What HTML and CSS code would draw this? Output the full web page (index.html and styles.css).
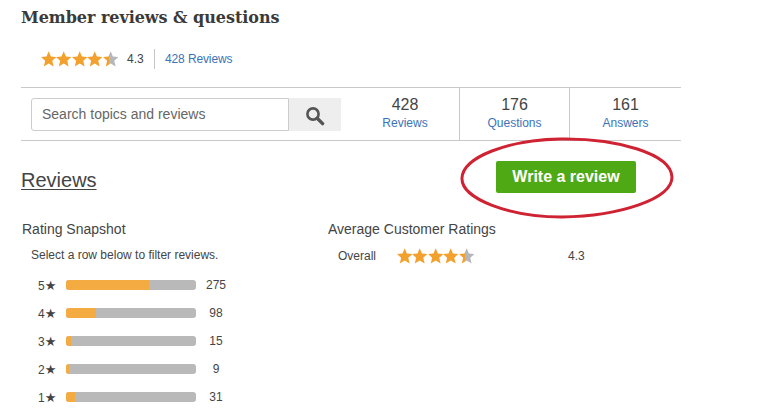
FILE: index.html
```html
<!DOCTYPE html>
<html lang="en">
<head>
<meta charset="utf-8">
<title>Member reviews &amp; questions</title>
<link rel="stylesheet" href="styles.css">
</head>
<body>
<svg class="defs" width="0" height="0" aria-hidden="true">
  <defs>
    <linearGradient id="partial" x1="0" x2="1" y1="0" y2="0">
      <stop offset="0.38" stop-color="#f2a12e"/>
      <stop offset="0.38" stop-color="#b5b8ba"/>
    </linearGradient>
    <symbol id="star" viewBox="0 0 16 16">
      <polygon points="8,0 10.3,5.5 16,6 11.7,9.8 13.1,15.8 8,12.6 2.9,15.8 4.3,9.8 0,6 5.7,5.5"/>
    </symbol>
  </defs>
</svg>
<main class="page">
  <h1 class="title">Member reviews &amp; questions</h1>
  <div class="summary">
    <span class="stars">
      <svg class="star"><use href="#star"/></svg>
      <svg class="star"><use href="#star"/></svg>
      <svg class="star"><use href="#star"/></svg>
      <svg class="star"><use href="#star"/></svg>
      <svg class="star star-partial"><use href="#star"/></svg>
    </span>
    <span class="summary-score">4.3</span>
    <a class="summary-link" href="#">428 Reviews</a>
  </div>
  <div class="toolbar">
    <form class="search">
      <div class="search-input">Search topics and reviews</div>
      <div class="search-button">
        <svg width="20" height="20" viewBox="0 0 20 20"><circle cx="8" cy="8" r="5.6" fill="none" stroke="#555" stroke-width="2.6"/><path d="M12.2 12.2 L17.6 17.6" stroke="#555" stroke-width="3.4" stroke-linecap="round"/></svg>
      </div>
    </form>
    <div class="stat stat-first"><span class="stat-num">428</span><a href="#">Reviews</a></div>
    <div class="stat"><span class="stat-num">176</span><a href="#">Questions</a></div>
    <div class="stat stat-last"><span class="stat-num">161</span><a href="#">Answers</a></div>
  </div>
  <div class="reviews-head">
    <h2 class="reviews-title">Reviews</h2>
    <div class="cta-wrap">
      <a class="cta" href="#">Write a review</a>
      <svg class="circle" width="216" height="84" viewBox="0 0 216 84"><path d="M2 41 C3 20 48 3 100 2 C158 1 211 17 212 40 C212 62 160 79 102 80 C50 80 1 62 2 41 Z" fill="none" stroke="#cf2233" stroke-width="3"/></svg>
    </div>
  </div>
  <div class="details">
    <section class="snapshot">
      <h3 class="sub">Rating Snapshot</h3>
      <p class="hint">Select a row below to filter reviews.</p>
      <div class="row"><span class="row-label">5<span class="row-star">★</span></span><span class="bar"><span class="fill" style="width:64%"></span></span><span class="count">275</span></div>
      <div class="row"><span class="row-label">4<span class="row-star">★</span></span><span class="bar"><span class="fill" style="width:23%"></span></span><span class="count">98</span></div>
      <div class="row"><span class="row-label">3<span class="row-star">★</span></span><span class="bar"><span class="fill" style="width:4%"></span></span><span class="count">15</span></div>
      <div class="row"><span class="row-label">2<span class="row-star">★</span></span><span class="bar"><span class="fill" style="width:2%"></span></span><span class="count">9</span></div>
      <div class="row"><span class="row-label">1<span class="row-star">★</span></span><span class="bar"><span class="fill" style="width:7%"></span></span><span class="count">31</span></div>
    </section>
    <section class="averages">
      <h3 class="sub">Average Customer Ratings</h3>
      <div class="overall">
        <span class="overall-label">Overall</span>
        <span class="stars">
          <svg class="star"><use href="#star"/></svg>
          <svg class="star"><use href="#star"/></svg>
          <svg class="star"><use href="#star"/></svg>
          <svg class="star"><use href="#star"/></svg>
          <svg class="star star-partial"><use href="#star"/></svg>
        </span>
        <span class="overall-score">4.3</span>
      </div>
    </section>
  </div>
</main>
</body>
</html>
```
FILE: styles.css
```css
* { box-sizing: border-box; }
html, body { margin: 0; padding: 0; background: #fff; }
body {
  font-family: "Liberation Sans", Arial, sans-serif;
  color: #444;
  font-size: 12px;
  overflow: hidden;
  height: 416px;
}
a { color: #3b73b9; text-decoration: none; }
.defs { position: absolute; }
.page { width: 681px; padding: 7px 0 0 21px; }
.title {
  margin: 0;
  font-family: "DejaVu Serif", serif;
  font-size: 16px;
  line-height: 21px;
  font-weight: 700;
  color: #3a3a3a;
  white-space: nowrap;
  letter-spacing: -0.04px;
}
.summary {
  display: flex;
  align-items: center;
  height: 20px;
  margin-top: 21px;
  padding-left: 20px;
}
.stars { display: inline-flex; flex: none; width: 77px; }
.star { width: 15.4px; height: 16px; fill: #f2a12e; display: block; flex: none; }
.star-partial { fill: url(#partial); }
.summary-score { margin-left: 9px; width: 27px; color: #444; }
.summary-link {
  border-left: 1px solid #c4c4c4;
  padding-left: 10px;
  line-height: 20px;
  letter-spacing: -0.12px;
}
.toolbar {
  display: flex;
  height: 54px;
  margin-top: 18px;
  border-top: 1px solid #c9c9c9;
  border-bottom: 1px solid #c9c9c9;
}
.search {
  display: flex;
  flex: none;
  width: 310px;
  margin: 10px 10px 0 10px;
  height: 33px;
}
.search-input {
  width: 258px;
  border: 1px solid #ccc;
  border-radius: 3px 0 0 3px;
  font-size: 14px;
  line-height: 30px;
  padding-left: 10px;
  color: #666;
}
.search-button {
  width: 52px;
  background: #eee;
  display: flex;
  align-items: center;
  justify-content: center;
  padding-top: 2px;
}
.stat {
  flex: none;
  width: 110px;
  display: flex;
  flex-direction: column;
  align-items: center;
  padding-top: 7px;
  border-right: 1px solid #c9c9c9;
}
.stat-first { width: 109px; }
.stat-last { border-right: 0; width: 111px; }
.stat-num { font-size: 16px; line-height: 19px; color: #444; }
.stat a { line-height: 16px; margin-top: 1px; }
.reviews-head {
  display: flex;
  justify-content: space-between;
  height: 53px;
  padding-right: 45px;
  padding-top: 20px;
}
.reviews-title {
  margin: 7px 0 0;
  font-size: 20px;
  line-height: 24px;
  font-weight: 400;
  color: #444;
  text-decoration: underline;
  text-decoration-thickness: 1px;
  text-underline-offset: 2px;
}
.cta-wrap { position: relative; }
.cta {
  display: block;
  width: 140px;
  height: 32px;
  background: #4fa915;
  border-radius: 2px;
  color: #fff;
  font-size: 16px;
  font-weight: 700;
  line-height: 31px;
  text-align: center;
}
.circle { position: absolute; left: -36px; top: -24px; pointer-events: none; }
.details { display: flex; margin-top: 26px; }
.snapshot { width: 307px; padding-left: 1px; }
.sub {
  margin: 0;
  font-size: 14px;
  line-height: 18px;
  font-weight: 400;
  color: #444;
}
.hint { margin: 9px 0 0 9px; line-height: 16px; }
.row {
  display: flex;
  align-items: center;
  height: 28px;
}
.hint + .row { margin-top: 8px; }
.row-label { width: 44px; padding-left: 16px; white-space: nowrap; }
.row-star { font-family: "DejaVu Sans", sans-serif; font-size: 13px; }
.bar {
  display: block;
  width: 130px;
  height: 10px;
  background: #b9b9b9;
  border-radius: 3px;
  overflow: hidden;
}
.fill { display: block; height: 100%; background: #f4ac42; }
.count { width: 40px; text-align: center; }
.averages { flex: 1; }
.overall { display: flex; align-items: center; height: 20px; margin-top: 8px; padding-left: 10px; }
.overall-label { width: 59px; }
.overall-score { margin-left: 94px; }
```
